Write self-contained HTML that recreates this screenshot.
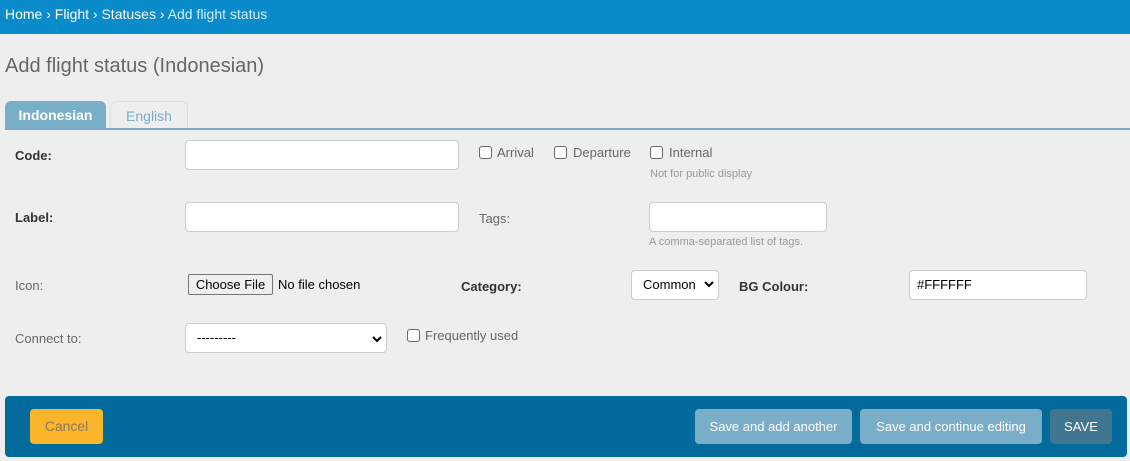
<!DOCTYPE html>
<html><head><meta charset="utf-8"><style>
*{box-sizing:border-box;margin:0;padding:0}
body{width:1130px;height:461px;background:#eeeeee;font-family:"Liberation Sans",Arial,sans-serif;position:relative;overflow:hidden;color:#555}
.a{position:absolute;white-space:nowrap}
.hdr{left:0;top:0;width:1130px;height:34px;background:#0a8bcb;color:#fff;font-size:14px;line-height:28px;padding-left:5px}
.hdr .c{color:#d6ecf7}
h1{position:absolute;left:5px;top:55px;font-size:20px;font-weight:normal;color:#666}
.tab{position:absolute;top:101px;height:28px;border-radius:6px 6px 0 0;font-size:14px;line-height:28px;text-align:center}
.line{left:5px;top:128px;width:1125px;height:2px;background:#79aec8}
.lbl{font-size:13px;color:#666}
.b{font-weight:bold;color:#333}
.in{position:absolute;background:#fff;border:1px solid #ccc;border-radius:4px}
.cb{position:absolute;width:13px;height:13px;border:1px solid #666;border-radius:3px;background:#fff}
.help{font-size:11px;color:#999}
.sel{position:absolute;background:#fff;border:1px solid #ccc;border-radius:4px;font-size:13px;color:#000}
.foot{left:5px;top:396px;width:1122px;height:61px;background:#026b9c;border-radius:4px}
.btn{position:absolute;top:409px;height:35px;border-radius:4px;font-size:13px;line-height:35px;text-align:center;color:#fff}
</style></head><body>
<div class="a hdr">Home <span>›</span> Flight › Statuses › <span class="c">Add flight status</span></div>
<h1>Add flight status (Indonesian)</h1>
<div class="tab" style="left:5px;width:101px;background:#79aec8;color:#fff;font-weight:bold">Indonesian</div>
<div class="tab" style="left:110px;width:78px;border:1px solid #ddd;border-bottom:none;color:#79aec8">English</div>
<div class="a line"></div>

<div class="a lbl b" style="left:15px;top:148px">Code:</div>
<div class="in" style="left:185px;top:140px;width:274px;height:30px"></div>
<div class="cb" style="left:479px;top:146px"></div><div class="a lbl" style="left:497px;top:145px">Arrival</div>
<div class="cb" style="left:554px;top:146px"></div><div class="a lbl" style="left:573px;top:145px">Departure</div>
<div class="cb" style="left:650px;top:146px"></div><div class="a lbl" style="left:669px;top:145px">Internal</div>
<div class="a help" style="left:650px;top:168px">Not for public display</div>

<div class="a lbl b" style="left:15px;top:210px">Label:</div>
<div class="in" style="left:185px;top:202px;width:274px;height:30px"></div>
<div class="a lbl" style="left:479px;top:211px">Tags:</div>
<div class="in" style="left:649px;top:202px;width:178px;height:30px"></div>
<div class="a help" style="left:649px;top:236px">A comma-separated list of tags.</div>

<div class="a lbl" style="left:15px;top:278px">Icon:</div>
<div class="a" style="left:188px;top:274px;width:85px;height:21px;border:1px solid #767676;border-radius:2px;background:#efefef;font-size:13px;color:#000;text-align:center;line-height:19px">Choose File</div>
<div class="a" style="left:278px;top:277px;font-size:13px;color:#000">No file chosen</div>
<div class="a lbl b" style="left:461px;top:279px">Category:</div>
<div class="sel" style="left:631px;top:270px;width:88px;height:30px;line-height:28px;padding-left:11px">Common</div>
<svg class="a" style="left:704px;top:280px" width="10" height="8"><path d="M1 2l4 4 4-4" stroke="#000" stroke-width="2" fill="none"/></svg>
<div class="a lbl b" style="left:739px;top:279px">BG Colour:</div>
<div class="in" style="left:909px;top:270px;width:178px;height:30px;font-size:13px;color:#000;line-height:28px;padding-left:7px">#FFFFFF</div>

<div class="a lbl" style="left:15px;top:331px">Connect to:</div>
<div class="sel" style="left:185px;top:323px;width:202px;height:30px;line-height:28px;padding-left:11px">---------</div>
<svg class="a" style="left:372px;top:335px" width="10" height="8"><path d="M1 2l4 4 4-4" stroke="#000" stroke-width="2" fill="none"/></svg>
<div class="cb" style="left:407px;top:329px"></div><div class="a lbl" style="left:425px;top:328px">Frequently used</div>

<div class="a foot"></div>
<div class="btn" style="left:30px;width:73px;background:#fbb52b;color:#8a7a5a;font-size:14px">Cancel</div>
<div class="btn" style="left:695px;width:157px;background:#79adc8">Save and add another</div>
<div class="btn" style="left:860px;width:182px;background:#79adc8">Save and continue editing</div>
<div class="btn" style="left:1050px;width:62px;background:#417690">SAVE</div>
</body></html>
